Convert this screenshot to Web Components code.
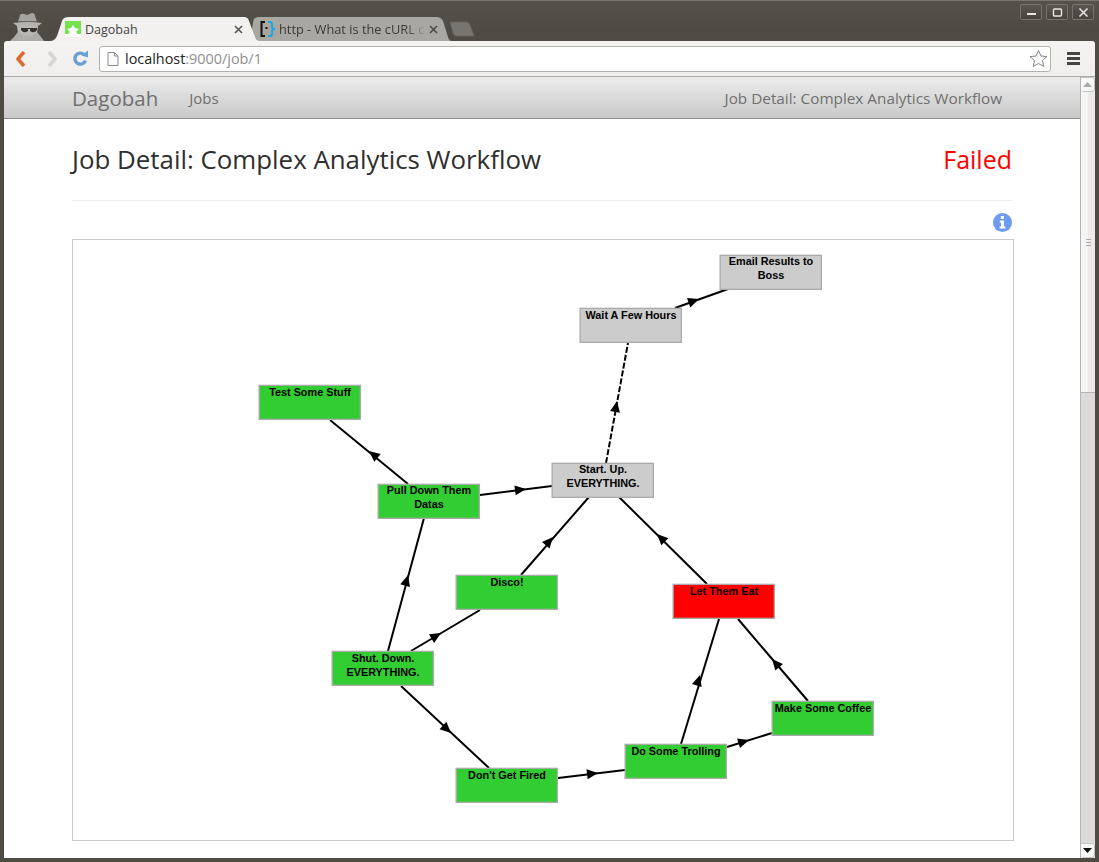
<!DOCTYPE html>
<html>

<head>
    <meta charset="utf-8">
    <title>Dagobah</title>
    <style>
        html, body {
            margin: 0;
            height: 100%;
            overflow: hidden;
        }

        body {
            font-family: "Open Sans", sans-serif;
        }

        browser-window {
            height: 862px;
        }
    </style>
</head>

<body>
    <browser-window>
        <window-bar slot="bar"></window-bar>
        <url-bar slot="toolbar"></url-bar>
        <top-nav slot="nav"></top-nav>
        <job-page>
            <job-graph></job-graph>
        </job-page>
        <page-scrollbar slot="scrollbar"></page-scrollbar>
    </browser-window>

    <script>
        // Helper: class with its shadow markup given as a string
        function comp(name, html) {
            customElements.define(name, class extends HTMLElement {
                connectedCallback() {
                    if (this.shadowRoot) return
                    this.attachShadow({ mode: 'open' }).innerHTML = html
                }
            })
        }

        comp('browser-window', `
            <style>
                :host { display: flex; flex-direction: column; background: #4e4b44; padding: 0 4px 4px 4px; box-sizing: border-box; border-top: 1px solid #77756f; }
                .bar { flex: none; height: 40px; margin: 0 -4px; }
                .tool { flex: none; height: 36px; }
                .main { flex: 1; display: flex; min-height: 0; background: #fff; }
                .left { flex: 1; display: flex; flex-direction: column; min-width: 0; }
            </style>
            <div class="bar"><slot name="bar"></slot></div>
            <div class="tool"><slot name="toolbar"></slot></div>
            <div class="main">
                <div class="left"><slot name="nav"></slot><slot></slot></div>
                <slot name="scrollbar"></slot>
            </div>`)

        comp('window-bar', `
            <style>
                :host { display: block; position: relative; height: 40px; background: linear-gradient(#55524b, #4e4b44 30px); font: 12.5px "Open Sans", sans-serif; }
                .spy { position: absolute; left: 8px; top: 12px; }
                .tab { position: absolute; top: 16px; height: 24px; display: flex; align-items: center; box-sizing: border-box; color: #444; }
                .tabbg { position: absolute; left: 0; top: 0; }
                .t1 { left: 50px; width: 202px; z-index: 1; }
                .t2 { left: 250px; width: 202px; color: #3c3a34; }
                .fav { position: relative; margin-left: 15px; width: 16px; height: 16px; flex: none; }
                .lab { position: relative; margin-left: 4px; white-space: nowrap; overflow: hidden; flex: 1; }
                .t2 .fav { margin-left: 10px; }
                .t2 .lab { margin-left: 3px; font-size: 12.8px; -webkit-mask-image: linear-gradient(90deg, #000 85%, transparent); mask-image: linear-gradient(90deg, #000 85%, transparent); }
                .x { position: relative; width: 9px; height: 9px; margin: 0 9px 0 11px; flex: none; }
                .t2 .x { margin: 0 14px 0 2px; }
                .new { position: absolute; left: 449px; top: 20px; }
                .btns { position: absolute; right: 5px; top: 3px; display: flex; gap: 4px; }
                .btn { width: 20px; height: 14px; border: 1px solid #77756e; border-radius: 2px; background: linear-gradient(#5a5750, #47443d); display: flex; align-items: center; justify-content: center; }
            </style>
            <svg class="spy" width="38" height="28" viewBox="0 0 38 28">
                <path d="M10 9 L12 2 Q13 0 16 1 L19 2 L24 0 Q27 0 27 3 L29 9 Z" fill="#a5a4a0"/>
                <path d="M10 8 H29 V10 H10 Z" fill="#6b6964"/>
                <path d="M5 10 Q19 8 34 10 L30 13 H9 Z" fill="#b4b3ae"/>
                <path d="M9 13 H30 L29 20 L25 23 H14 L10 20 Z" fill="#b9b8b3"/>
                <path d="M13 15 H20 V18 Q16 21 13 17 Z M22 15 H29 V17 Q26 21 22 18 Z M19 15 H23 V16 H19 Z" fill="#34332f"/>
                <path d="M10 19 L14 23 H25 L29 19 L33 24 L36 28 H2 L6 24 Z" fill="#aeada8"/>
            </svg>
            <div class="tab t1">
                <svg class="tabbg" width="210" height="24" viewBox="0 0 210 24"><path d="M0 24 Q5 24 7 19 L12 4 Q13 0 19 0 H194 Q198 0 199 4 L205 20 Q206 24 210 24 Z" fill="#f2f1ef"/></svg>
                <svg class="fav" viewBox="0 0 16 16"><rect width="16" height="16" fill="#74e34e"/><path d="M8 4 L10 7 L14 8 L11 11 L13 13 H16 V16 H0 V13 H3 L5 11 L2 8 L6 7 Z" fill="#fff"/></svg>
                <span class="lab">Dagobah</span>
                <svg class="x" viewBox="0 0 9 9"><path d="M1 1 L8 8 M8 1 L1 8" stroke="#555" stroke-width="1.6"/></svg>
            </div>
            <div class="tab t2">
                <svg class="tabbg" width="202" height="24" viewBox="0 0 202 24"><path d="M0 24 L3 6 Q3 0 9 0 H186 Q191 0 193 4 L198 20 Q199 24 202 24 Z" fill="#a9a7a1"/></svg>
                <svg class="fav" viewBox="0 0 16 16"><path d="M5 1 H1.5 V15 H5" fill="none" stroke="#111" stroke-width="2"/><path d="M8 1 H10 Q12 1 12 3 V6 Q12 8 15 8 Q12 8 12 10 V13 Q12 15 10 15 H8" fill="none" stroke="#19a7e8" stroke-width="2"/><rect x="5.5" y="6" width="2" height="2" fill="#111"/></svg>
                <span class="lab">http - What is the cURL c</span>
                <svg class="x" viewBox="0 0 9 9"><path d="M1 1 L8 8 M8 1 L1 8" stroke="#4a4a46" stroke-width="1.6"/></svg>
            </div>
            <svg class="new" width="27" height="16" viewBox="0 0 27 16"><path d="M1 1 H17 Q20 1 21 4 L25 15 H7 Q5 15 4 12 Z" fill="#77756f" stroke="#66645d"/></svg>
            <div class="btns">
                <div class="btn"><svg width="11" height="9" viewBox="0 0 11 9"><rect x="1" y="5" width="9" height="2" fill="#e8e7e4"/></svg></div>
                <div class="btn"><svg width="11" height="9" viewBox="0 0 11 9"><rect x="1.5" y="1" width="8" height="7" rx="1" fill="none" stroke="#e8e7e4" stroke-width="1.4"/></svg></div>
                <div class="btn"><svg width="11" height="9" viewBox="0 0 11 9"><path d="M1.5 .5 L9.5 8.5 M9.5 .5 L1.5 8.5" stroke="#e8e7e4" stroke-width="1.5"/></svg></div>
            </div>`)

        comp('url-bar', `
            <style>
                :host { display: flex; align-items: center; height: 36px; background: linear-gradient(#f4f3f1, #f0efed); border-radius: 3px 3px 0 0; box-sizing: border-box; border-bottom: 1px solid #a9a9a9; padding-left: 11px; }
                svg { flex: none; }
                .fwd { margin-left: 20px; }
                .rel { margin-left: 14px; }
                .box { flex: none; width: 952px; height: 26px; margin-left: 10px; box-sizing: border-box; background: #fff; border: 1px solid #b2b2ad; border-radius: 3px; display: flex; align-items: center; padding-left: 7px; font: 14.4px "Open Sans", sans-serif; color: #222; }
                .box span { margin-left: 6px; }
                .box i { font-style: normal; color: #8e8e8e; }
                .star { margin-left: auto; margin-right: 2px; }
                .menu { margin-left: 16px; }
            </style>
            <svg width="12" height="16" viewBox="0 0 12 16"><path d="M9 1 L3 8 L9 15" fill="none" stroke="#dc6a33" stroke-width="3.6" stroke-linejoin="round"/></svg>
            <svg class="fwd" width="11" height="16" viewBox="0 0 11 16"><path d="M2 1 L8 8 L2 15" fill="none" stroke="#d5d5d3" stroke-width="3.6" stroke-linejoin="round"/></svg>
            <svg class="rel" width="17" height="17" viewBox="0 0 17 17"><path d="M13.5 10.5 A5.5 5.5 0 1 1 12 4.5" fill="none" stroke="#6a9fd4" stroke-width="3.4"/><path d="M9.5 5.5 L16 0.5 V7.5 Z" fill="#6a9fd4"/></svg>
            <div class="box">
                <svg width="12" height="14" viewBox="0 0 12 14"><path d="M1 .5 H7.5 L11 4 V13.5 H1 Z M7.5 .5 V4 H11" fill="#fbfbfb" stroke="#8d8d8d"/></svg>
                <span>localhost<i>:9000/job/1</i></span>
                <svg class="star" width="19" height="19" viewBox="0 0 19 19"><path d="M9.5 1.5 L12 7 L18 7.6 L13.5 11.6 L14.8 17.5 L9.5 14.5 L4.2 17.5 L5.5 11.6 L1 7.6 L7 7 Z" fill="#fbfbfb" stroke="#868686"/></svg>
            </div>
            <svg class="menu" width="13" height="13" viewBox="0 0 13 13"><path d="M0 0 H13 V3 H0 Z M0 5 H13 V8 H0 Z M0 10 H13 V13 H0 Z" fill="#444"/></svg>`)

        comp('top-nav', `
            <style>
                :host { display: flex; align-items: center; flex: none; height: 42px; box-sizing: border-box; padding: 0 78px 0 68px; background: linear-gradient(#ececec, #c9c9c9); border-bottom: 1px solid #8e8e8e; color: #6f6f6f; font-family: "Open Sans", sans-serif; }
                .brand { font-size: 20.5px; }
                .jobs { font-size: 15px; margin-left: 31px; }
                .here { font-size: 15.3px; margin-left: auto; }
            </style>
            <span class="brand">Dagobah</span>
            <span class="jobs">Jobs</span>
            <span class="here">Job Detail: Complex Analytics Workflow</span>`)

        comp('job-page', `
            <style>
                :host { display: block; flex: 1; min-height: 0; background: #fff; padding: 0 68px; overflow: hidden; font-family: "Open Sans", sans-serif; }
                header { display: flex; justify-content: space-between; align-items: center; height: 81px; border-bottom: 1px solid #eee; color: #2f2f2f; font-size: 25.87px; }
                header span:first-child { margin-top: -2px; }
                .st { color: #f00; font-size: 25px; margin-top: -2px; }
                .info { display: flex; justify-content: flex-end; height: 26px; padding-top: 12px; }
            </style>
            <header><span>Job Detail: Complex Analytics Workflow</span><span class="st">Failed</span></header>
            <div class="info">
                <svg width="19" height="19" viewBox="0 0 19 19"><circle cx="9.5" cy="9.5" r="9.5" fill="#6c9cf0"/><path d="M7.8 3 H11 V6 H7.8 Z M6.8 7.6 H11 V13.6 H12.4 V15.6 H6.6 V13.6 H8 V9.6 H6.8 Z" fill="#fff"/></svg>
            </div>
            <slot></slot>`)

        comp('page-scrollbar', `
            <style>
                :host { display: flex; flex-direction: column; flex: none; width: 15px; box-sizing: border-box; border-left: 1px solid #b4b4b4; background: #fff; }
                .arrow { flex: none; height: 15px; display: flex; align-items: center; justify-content: center; background: #f7f7f6; border: 1px solid #c4c4c4; border-left: 0; border-radius: 0 3px 3px 3px; box-sizing: border-box; }
                .thumb { flex: none; height: 301px; background: linear-gradient(90deg, #f6f5f3 50%, #ecebe9 50%); display: flex; align-items: center; justify-content: center; border-bottom: 1px solid #b4b4b4; box-sizing: border-box; }
                .grip { width: 5px; height: 7px; background: repeating-linear-gradient(#a8a8a8 0 1px, transparent 1px 3px); }
                .track { flex: 1; background: #dcdbd9; }
            </style>
            <div class="arrow"><svg width="9" height="5" viewBox="0 0 9 5"><path d="M4.5 0 L9 5 H0 Z" fill="#aaa"/></svg></div>
            <div class="thumb"><div class="grip"></div></div>
            <div class="track"></div>
            <div class="arrow"><svg width="9" height="5" viewBox="0 0 9 5"><path d="M0 0 H9 L4.5 5 Z" fill="#111"/></svg></div>`)

        // One task box of the graph, placed on the free canvas
        customElements.define('job-node', class extends HTMLElement {
            connectedCallback() {
                if (this.shadowRoot) return
                const c = { ok: '#32cd32', bad: '#ff0000', idle: '#cccccc' }[this.getAttribute('state')]
                const up = this.hasAttribute('up') ? -1 : 0
                const root = this.attachShadow({ mode: 'open' })
                root.innerHTML = `
                    <style>
                        :host { position: absolute; width: 102px; height: 35px; color: #000; font: bold 10.85px/14px "Liberation Sans", sans-serif; text-align: center; }
                        svg { position: absolute; left: 0; top: 0; overflow: visible; }
                        div { position: relative; margin-top: ${up}px; }
                    </style>
                    <svg width="102" height="35"><rect x=".15" y=".35" width="101.2" height="34" fill="${c}" stroke="#aaa" stroke-width="1.3"/></svg>
                    <div><slot></slot></div>`
                this.style.left = this.getAttribute('x') + 'px'
                this.style.top = this.getAttribute('y') + 'px'
            }
        })

        const EDGES = [
            // x1, y1, x2, y2, arrow tip x, arrow tip y, dashed
            [675, 308, 728, 289, 699, 299],
            [606, 463, 628, 343, 617, 401, 1],
            [408, 484, 330, 420, 369, 451],
            [480, 495, 552, 486, 526, 489],
            [388, 651, 424, 518, 408, 575],
            [411, 651, 480, 610, 441, 633],
            [521, 575, 589, 497, 553, 537],
            [707, 584, 619, 497, 657, 534],
            [808, 701, 738, 619, 772, 659],
            [681, 744, 719, 619, 700, 675],
            [727, 747, 772, 733, 749, 740],
            [401, 686, 489, 768, 451, 733],
            [558, 778, 625, 770, 598, 773],
        ]
        // page coordinates of the graph box corner, edges are listed in page coordinates
        const OX = 73, OY = 240

        customElements.define('job-graph', class extends HTMLElement {
            connectedCallback() {
                if (this.shadowRoot) return
                const root = this.attachShadow({ mode: 'open' })
                let lines = ''
                for (const [x1, y1, x2, y2, ax, ay, dash] of EDGES) {
                    const a = Math.atan2(y2 - y1, x2 - x1) * 180 / Math.PI
                    lines += `<line x1="${x1 - OX}" y1="${y1 - OY}" x2="${x2 - OX}" y2="${y2 - OY}" ${dash ? 'stroke-dasharray="6 2"' : ''}/>`
                    lines += `<path d="M0 0 L-11 -5 L-11 5 Z" transform="translate(${ax - OX} ${ay - OY}) rotate(${a})"/>`
                }
                const nodes = [
                    ['idle', 720, 255, 'Email Results to Boss', 1],
                    ['idle', 580, 308, 'Wait A Few Hours'],
                    ['ok', 259, 385, 'Test Some Stuff'],
                    ['idle', 552, 463, 'Start. Up. EVERYTHING.', 1],
                    ['ok', 378, 484, 'Pull Down Them Datas', 1],
                    ['ok', 456, 575, 'Disco!'],
                    ['bad', 673, 584, 'Let Them Eat'],
                    ['ok', 772, 701, 'Make Some Coffee'],
                    ['ok', 332, 651, 'Shut. Down. EVERYTHING.'],
                    ['ok', 625, 744, 'Do Some Trolling'],
                    ['ok', 456, 768, "Don't Get Fired"],
                ].map(n => `<job-node state="${n[0]}" x="${n[1] - OX}" y="${n[2] - OY}"${n[4] ? ' up' : ''}>${n[3]}</job-node>`).join('')
                root.innerHTML = `
                    <style>
                        :host { display: block; position: relative; box-sizing: border-box; width: 942px; height: 602px; border: 1px solid #ccc; background: #fff; }
                        svg { position: absolute; left: 0; top: 0; }
                        line { stroke: #000; stroke-width: 2; }
                    </style>
                    <svg width="940" height="600">${lines}</svg>
                    ${nodes}`
            }
        })
    </script>
</body>

</html>
